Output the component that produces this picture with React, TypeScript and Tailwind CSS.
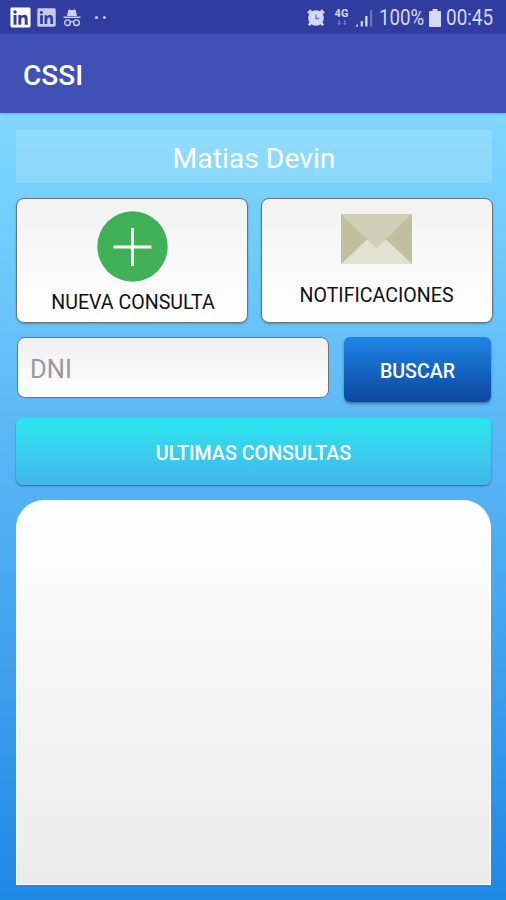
import { FaLinkedin } from "react-icons/fa"

function IncognitoIcon() {
  return (
    <svg viewBox="0 0 18 18" className="ml-[6px] h-[18px] w-[18px]" fill="none">
      <path d="M4 7 5.3 1.2Q5.6.3 6.5.6L9 1.3l2.5-.7q.9-.3 1.2.6L14 7Z" fill="#cdd2f2" />
      <path d="M.5 8.3h17" stroke="#cdd2f2" strokeWidth="1.5" />
      <circle cx="4.5" cy="13.7" r="2.8" stroke="#cdd2f2" strokeWidth="1.4" />
      <circle cx="13.5" cy="13.7" r="2.8" stroke="#cdd2f2" strokeWidth="1.4" />
      <path d="M7.2 13.2q1.8-1.2 3.6 0" stroke="#cdd2f2" strokeWidth="1.3" />
    </svg>
  )
}

function AlarmIcon() {
  return (
    <svg viewBox="0 0 18 18" className="h-[18px] w-[18px]" fill="none">
      <path d="m1.2 4.2 3-3M16.8 4.2l-3-3M4 13.5l-2 2.8M14 13.5l2 2.8" stroke="#d5d9f4" strokeWidth="2.8" />
      <circle cx="9" cy="9" r="7.8" fill="#d5d9f4" />
      <path d="M9 5.5v4h3.2" stroke="#6a72bd" strokeWidth="1.3" />
    </svg>
  )
}

function NetworkIcon() {
  return (
    <div className="ml-[9px] flex h-[18px] w-[15px] flex-col items-center">
      <span className="text-[11px] leading-[10px] font-bold">4G</span>
      <svg viewBox="0 0 10 6" className="mt-px h-[6px] w-[10px]" fill="#7079c6">
        <path d="M1.5 0h1.4v3h1.3l-2 2.6L.2 3h1.3ZM7.1 0h1.4v3h1.3l-2 2.6-2-2.6h1.3Z" />
      </svg>
    </div>
  )
}

function SignalIcon() {
  return (
    <svg viewBox="0 0 18 18" className="ml-[6px] h-[18px] w-[18px]" fill="#d5d9f4">
      <path d="M0 17.5 3 15v2.5ZM5.7 12h2.2v5.5H5.7ZM10.2 7h2.3v10.5h-2.3Z" />
      <path d="M15 1h2.2v16.5H15Z" fill="#6972c2" />
    </svg>
  )
}

function BatteryIcon() {
  return (
    <svg viewBox="0 0 12 18" className="ml-[5px] h-[18px] w-[12px]" fill="#d5d9f4">
      <path d="M3.5 0h5v2H11q1 0 1 1v14q0 1-1 1H1q-1 0-1-1V3q0-1 1-1h2.5Z" />
    </svg>
  )
}

function StatusBar() {
  return (
    <div className="flex h-[34px] items-center bg-[#303c9f] pt-px pr-[12px] pl-[9px] text-[#d5d9f4]">
      <FaLinkedin className="h-[23px] w-[23px] text-white" />
      <FaLinkedin className="ml-[4px] h-[21px] w-[21px] text-[#c3c9ef]" />
      <IncognitoIcon />
      <div className="ml-[14px] flex gap-[5px]">
        <span className="h-[3px] w-[3px] rounded-full bg-[#c3c9ef]" />
        <span className="h-[3px] w-[3px] rounded-full bg-[#c3c9ef]" />
      </div>
      <div className="ml-auto flex items-center">
        <AlarmIcon />
        <NetworkIcon />
        <SignalIcon />
        <span className="ml-[6px] w-[45px] origin-left scale-x-[0.87] text-[21.5px] leading-none whitespace-nowrap">
          100%
        </span>
        <BatteryIcon />
        <span className="ml-[5px] w-[48px] origin-left scale-x-[0.88] text-[21.5px] leading-none whitespace-nowrap">
          00:45
        </span>
      </div>
    </div>
  )
}

function PlusIcon() {
  return (
    <svg viewBox="0 0 71 71" className="h-[71px] w-[71px]">
      <circle cx="35.5" cy="35.5" r="35.2" fill="#40b157" />
      <path d="M35.5 17v38M16.5 36h38" stroke="#fff" strokeWidth="3" />
    </svg>
  )
}

function EnvelopeIcon() {
  return (
    <svg viewBox="0 0 71 50" className="h-[50px] w-[71px]">
      <path d="M0 0h71v50H0Z" fill="#c2bf9f" />
      <path d="M0 50 25.5 26h20L71 50Z" fill="#e3e1d0" />
      <path d="M0 0h71L38 32q-2.5 2.4-5 0Z" fill="#d0cfb7" />
    </svg>
  )
}

const cardClass =
  "flex h-[125px] w-[232px] flex-col items-center rounded-[8px] border border-[#6e7276] bg-linear-to-b from-[#f2f2f2] to-white text-[19.6px] leading-[22px] text-[#111] shadow-[0_1px_2px_rgba(0,0,0,0.25)]"

export default function App() {
  return (
    <div className="flex h-[900px] w-[506px] flex-col overflow-hidden bg-[#1e88e5] font-['Roboto',sans-serif]">
      <StatusBar />
      <header className="z-10 flex h-[79px] items-center bg-[#3f51b5] pt-[5px] pl-[23px] shadow-[0_1px_2px_rgba(0,0,0,0.2)]">
        <h1 className="text-[28px] leading-none font-medium text-white">CSSI</h1>
      </header>

      <main className="flex-1 bg-linear-to-b from-[#80d8ff] to-[#1e88e5] pt-[17px] pr-[13px] pl-[16px]">
        <div className="flex h-[53px] w-[476px] items-center justify-center bg-white/15 pt-[5px] text-[28.3px] leading-none text-white">
          Matias Devin
        </div>

        <div className="mt-[15px] flex gap-[13px]">
          <button className={cardClass}>
            <span className="mt-[12px] ml-px">
              <PlusIcon />
            </span>
            <span className="mt-[10px] ml-[2px]">NUEVA CONSULTA</span>
          </button>
          <button className={cardClass}>
            <span className="mt-[15px] mr-px">
              <EnvelopeIcon />
            </span>
            <span className="mt-[21px] mr-px">NOTIFICACIONES</span>
          </button>
        </div>

        <div className="mt-[14px] flex h-[66px] items-start gap-[15px] pl-px">
          <input
            type="text"
            placeholder="DNI"
            className="h-[61px] w-[312px] rounded-[8px] border border-[#6e7276] bg-linear-to-b from-[#f0f0f0] to-white px-[12px] pt-[3px] text-[25.5px] text-[#333] placeholder:text-[#999]"
          />
          <button className="h-[65px] w-[147px] rounded-[6px] bg-linear-to-b from-[#1e86e5] to-[#0d47a1] pt-[5px] text-[19.6px] font-medium text-white shadow-[0_2px_3px_rgba(0,0,0,0.35)]">
            BUSCAR
          </button>
        </div>

        <button className="mt-[15px] block h-[67px] w-[475px] rounded-[7px] bg-linear-to-b from-[#29e7ef] to-[#43b5ea] pt-[5px] text-[19.7px] font-medium text-white shadow-[0_1px_2px_rgba(0,0,0,0.45)]">
          ULTIMAS CONSULTAS
        </button>

        <div className="mt-[15px] h-[385px] w-[475px] rounded-t-[28px] border border-t-0 border-white bg-linear-to-b from-white to-[#ebebeb]" />
      </main>
    </div>
  )
}
